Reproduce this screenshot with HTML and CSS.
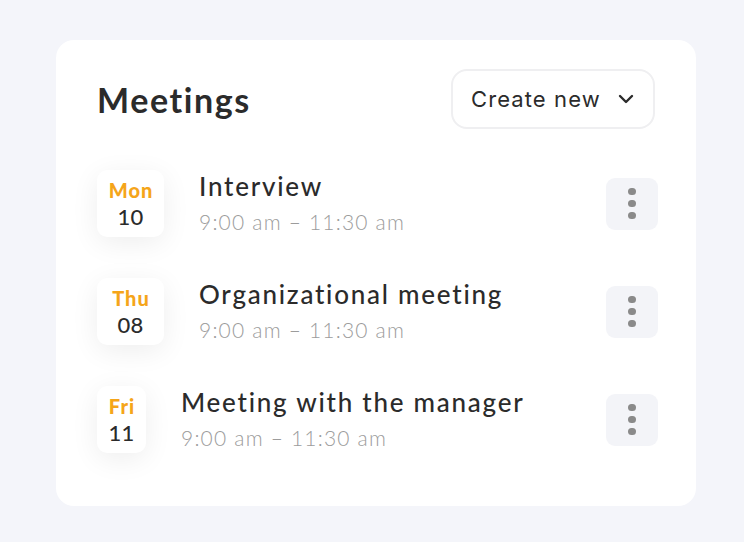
FILE: index.html
```html
<!DOCTYPE html>
<html>
<head>
<meta charset="utf-8">
<link rel="stylesheet" href="styles.css">
</head>
<body>
<div class="card">
  <div class="header">
    <h1 class="title">Meetings</h1>
    <button class="create"><span>Create new</span>
      <svg width="16" height="10" viewBox="0 0 16 10"><path d="M2 2l6 6 6-6" fill="none" stroke="#2b2b2b" stroke-width="2.4" stroke-linecap="round" stroke-linejoin="round"/></svg>
    </button>
  </div>
  <div class="list">
    <div class="row">
      <div class="date wide"><span class="day">Mon</span><span class="num">10</span></div>
      <div class="info"><div class="name">Interview</div><div class="time">9:00 am – 11:30 am</div></div>
      <button class="more"><i></i><i></i><i></i></button>
    </div>
    <div class="row">
      <div class="date wide"><span class="day">Thu</span><span class="num">08</span></div>
      <div class="info"><div class="name">Organizational meeting</div><div class="time">9:00 am – 11:30 am</div></div>
      <button class="more"><i></i><i></i><i></i></button>
    </div>
    <div class="row">
      <div class="date narrow"><span class="day">Fri</span><span class="num">11</span></div>
      <div class="info"><div class="name">Meeting with the manager</div><div class="time">9:00 am – 11:30 am</div></div>
      <button class="more"><i></i><i></i><i></i></button>
    </div>
  </div>
</div>
</body>
</html>
```

FILE: styles.css
```css
html, body { margin: 0; padding: 0; }
body {
  background: #f4f5fa;
  font-family: "Lato", "Noto Sans", sans-serif;
  color: #2b2b2b;
  padding: 40px 48px 36px 56px;
}
.card {
  width: 640px;
  box-sizing: border-box;
  height: 466px;
  background: #fff;
  border-radius: 18px;
  padding: 29px 38px 0 41px;
}
.header {
  display: flex;
  align-items: center;
  justify-content: space-between;
  height: 60px;
}
.title {
  margin: 0;
  font-size: 34px;
  font-weight: 700;
  color: #2b2b2b;
  letter-spacing: 1.6px;
}
.create {
  margin-right: 3px;
  width: 204px;
  height: 60px;
  box-sizing: border-box;
  border: 2px solid #efeff1;
  border-radius: 16px;
  background: #fff;
  display: flex;
  align-items: center;
  gap: 17px;
  padding: 0 0 0 18px;
  font-family: "Inter", "Roboto", sans-serif;
  font-size: 22px;
  letter-spacing: 1.1px;
  color: #2b2b2b;
}
.list {
  margin-top: 41px;
  display: flex;
  flex-direction: column;
  gap: 41px;
}
.row {
  display: flex;
  align-items: center;
  height: 67px;
}
.date {
  height: 67px;
  box-sizing: border-box;
  background: #fff;
  border-radius: 10px;
  box-shadow: 0 6px 28px rgba(0,0,0,0.07);
  display: flex;
  flex-direction: column;
  align-items: center;
  justify-content: center;
}
.date.wide { width: 67px; }
.date.narrow { width: 49px; }
.day { color: #f5a51a; font-weight: 900; font-size: 20px; line-height: 26px; letter-spacing: 1px; padding-left: 1px; }
.num { color: #2b2b2b; font-weight: 500; font-size: 22px; line-height: 28px; letter-spacing: 0.3px; }
.info {
  flex: 1;
  margin-left: 35px;
  display: flex;
  flex-direction: column;
}
.name { font-size: 26px; line-height: 30px; color: #2b2b2b; font-weight: 500; letter-spacing: 1.75px; }
.time { margin-top: 6px; font-size: 21px; line-height: 30px; color: #9c9c9c; font-weight: 300; letter-spacing: 1.2px; }
.more {
  width: 52px;
  height: 52px;
  border: none;
  border-radius: 9px;
  background: #f3f4f8;
  display: flex;
  flex-direction: column;
  align-items: center;
  justify-content: center;
  gap: 4.5px;
  padding: 0;
}
.more i {
  display: block;
  width: 7.5px;
  height: 7.5px;
  border-radius: 50%;
  background: #8a8a8a;
}
```
